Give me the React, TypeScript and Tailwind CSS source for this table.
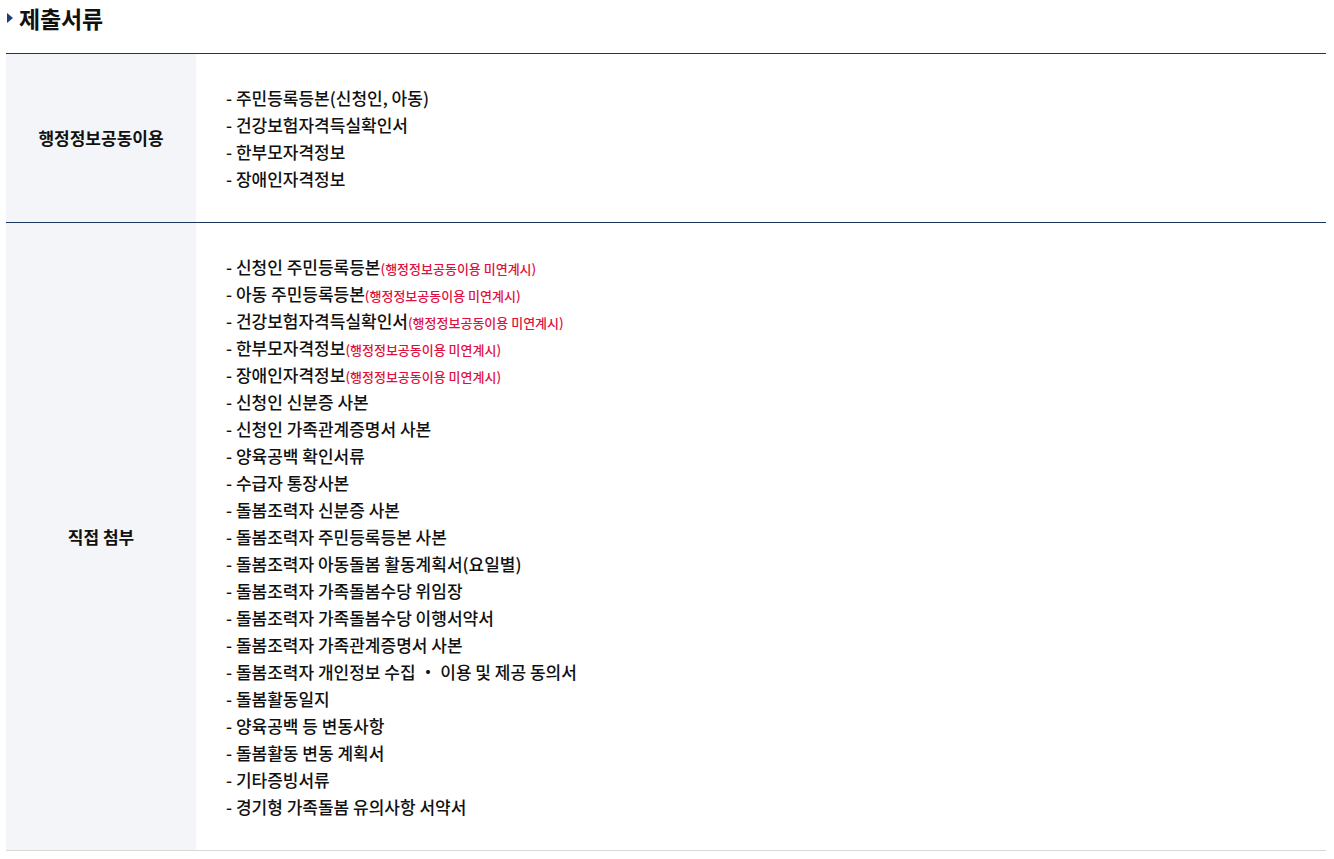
import React from "react";

const row1 = [
  "주민등록등본(신청인, 아동)",
  "건강보험자격득실확인서",
  "한부모자격정보",
  "장애인자격정보",
];

const row2: [string, boolean][] = [
  ["신청인 주민등록등본", true],
  ["아동 주민등록등본", true],
  ["건강보험자격득실확인서", true],
  ["한부모자격정보", true],
  ["장애인자격정보", true],
  ["신청인 신분증 사본", false],
  ["신청인 가족관계증명서 사본", false],
  ["양육공백 확인서류", false],
  ["수급자 통장사본", false],
  ["돌봄조력자 신분증 사본", false],
  ["돌봄조력자 주민등록등본 사본", false],
  ["돌봄조력자 아동돌봄 활동계획서(요일별)", false],
  ["돌봄조력자 가족돌봄수당 위임장", false],
  ["돌봄조력자 가족돌봄수당 이행서약서", false],
  ["돌봄조력자 가족관계증명서 사본", false],
  ["돌봄조력자 개인정보 수집 ・ 이용 및 제공 동의서", false],
  ["돌봄활동일지", false],
  ["양육공백 등 변동사항", false],
  ["돌봄활동 변동 계획서", false],
  ["기타증빙서류", false],
  ["경기형 가족돌봄 유의사항 서약서", false],
];

export default function App() {
  return (
    <div
      className="bg-white w-[1334px] h-[859px] overflow-hidden text-[#111]"
      style={{ fontFamily: '"Noto Sans CJK KR", "Noto Sans", sans-serif' }}
    >
      <div className="flex items-center h-[36px] pl-[7px]">
        <svg width="6" height="10" viewBox="0 0 6 10" className="mr-[6px]">
          <polygon points="0,0 6,5 0,10" fill="#1d3d7a" />
        </svg>
        <h2 className="text-[23px] font-bold tracking-[-0.2px] leading-none">제출서류</h2>
      </div>
      <div className="ml-[6px] mr-[8px] mt-[17px] border-t border-[#1d3660]">
        <div className="flex border-b border-[#1d3660]">
          <div className="w-[190px] shrink-0 bg-[#f4f5f8] flex items-center justify-center text-[17px] font-bold">
            행정정보공동이용
          </div>
          <ul className="py-[30px] pl-[30px] text-[17px] font-medium leading-[27px]">
            {row1.map((t) => (
              <li key={t}>- {t}</li>
            ))}
          </ul>
        </div>
        <div className="flex border-b border-[#d8d8d8]">
          <div className="w-[190px] shrink-0 bg-[#f4f5f8] flex items-center justify-center text-[17px] font-bold">
            직접 첨부
          </div>
          <ul className="py-[30px] pl-[30px] text-[17px] font-medium leading-[27px]">
            {row2.map(([t, red]) => (
              <li key={t}>
                - {t}
                {red && (
                  <span className="text-[13px] leading-none text-[#e0103f]">
                    (행정정보공동이용 미연계시)
                  </span>
                )}
              </li>
            ))}
          </ul>
        </div>
      </div>
    </div>
  );
}
